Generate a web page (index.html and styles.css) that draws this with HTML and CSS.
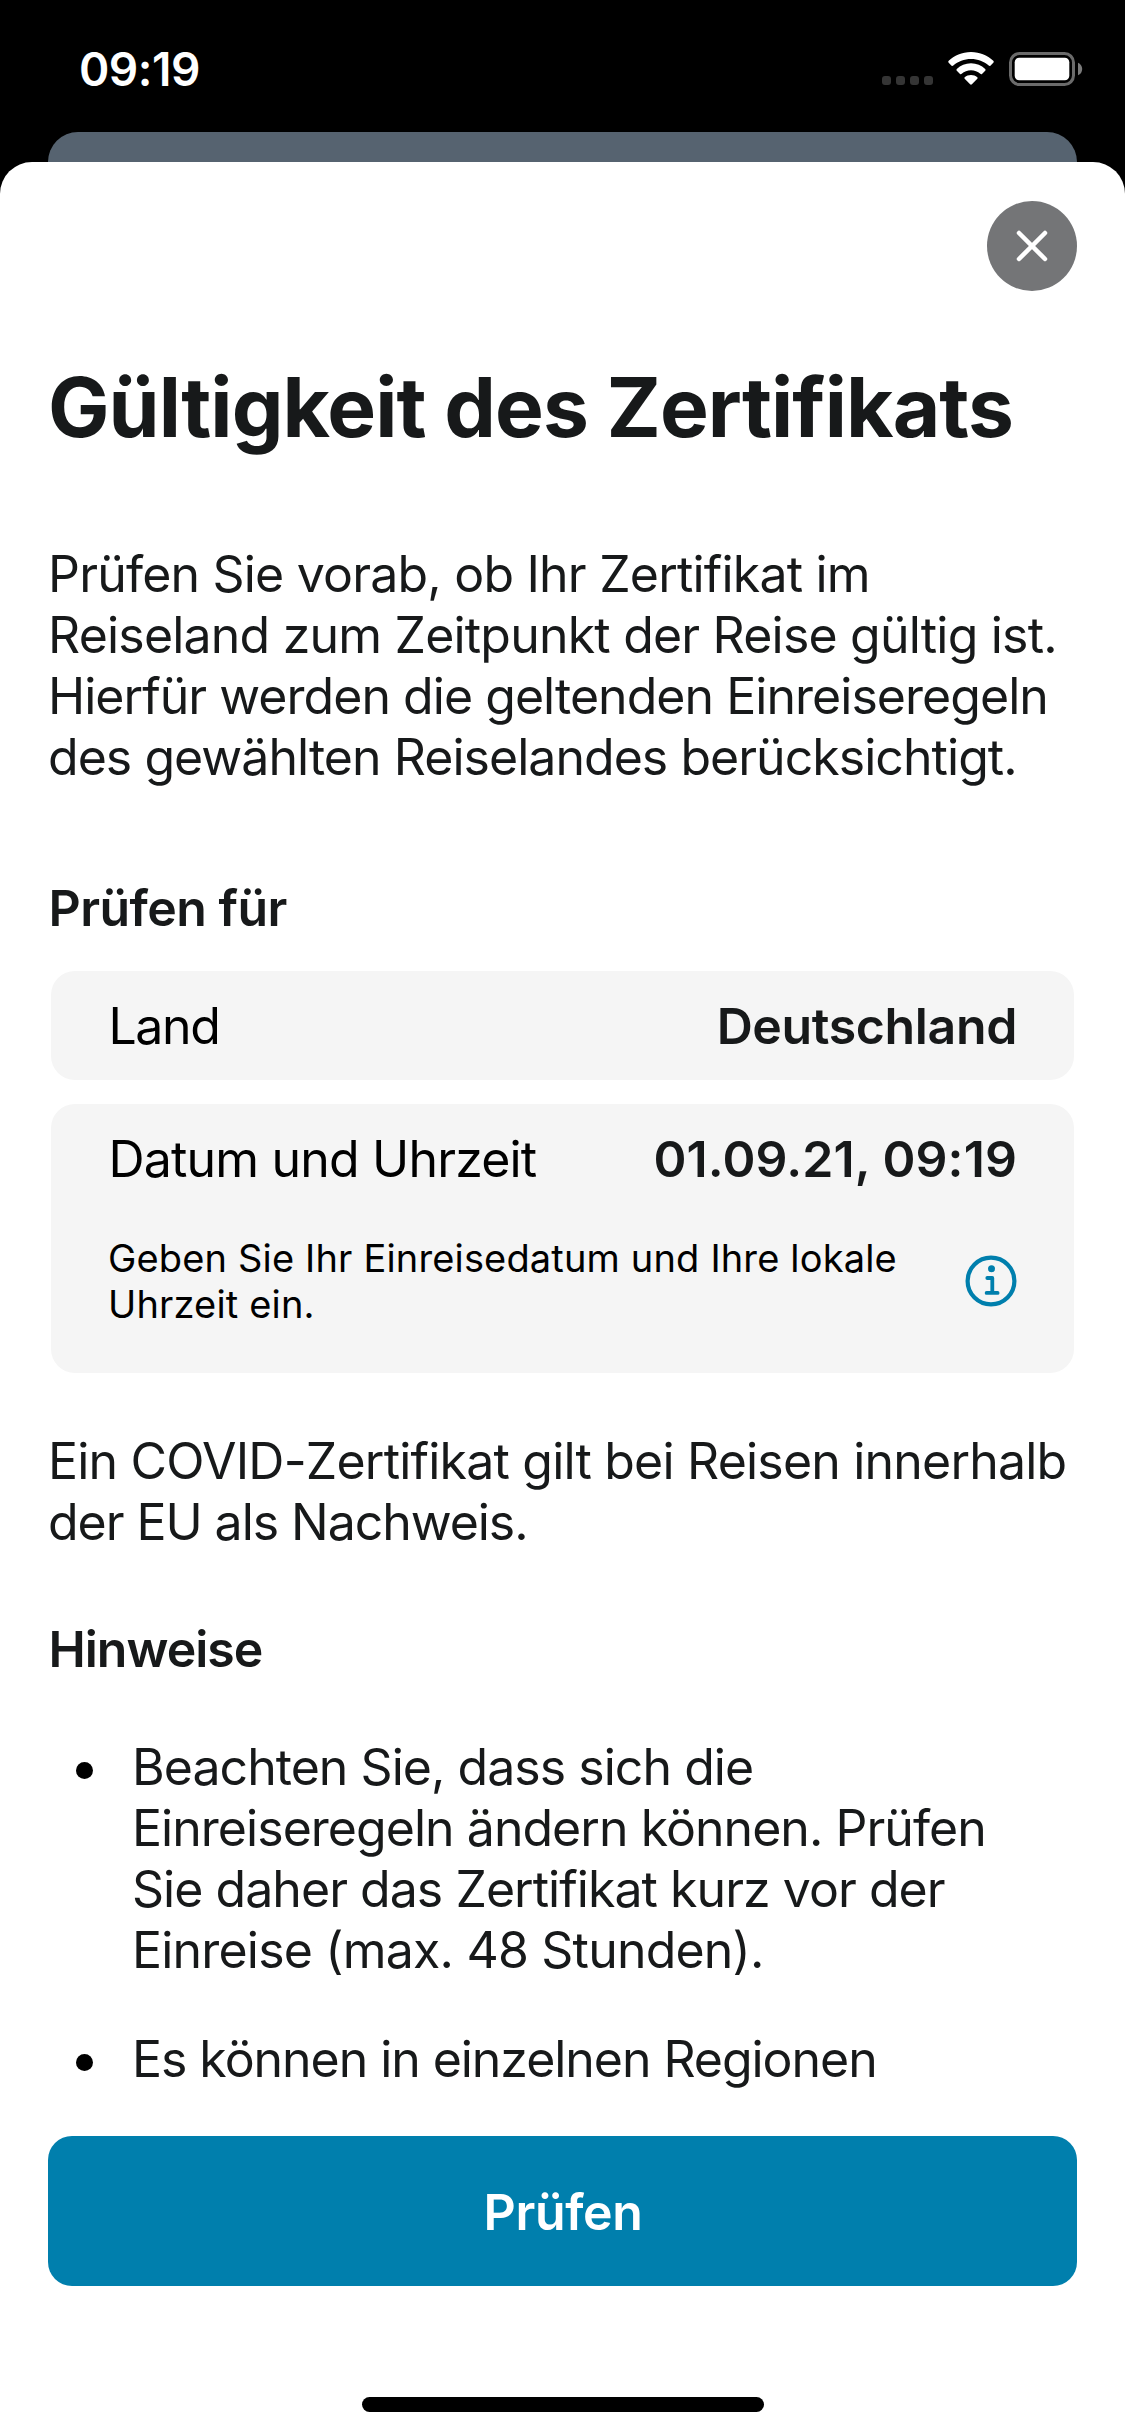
FILE: index.html
```html
<!DOCTYPE html>
<html lang="de">
<head>
<meta charset="utf-8">
<title>Gültigkeit des Zertifikats</title>
<link rel="stylesheet" href="styles.css">
</head>
<body>
<div class="screen">
  <header class="status-bar">
    <span class="time">09:19</span>
    <div class="status-icons">
      <span class="signal"><i></i><i></i><i></i><i></i></span>
      <svg class="wifi" width="46" height="34" viewBox="0 0 46 34">
        <path d="M23 0C14 0 6 3.500 .7 8.800Q-.2 9.800 .7 10.800L3.600 13.700Q4.400 14.400 5.300 13.600C10 9.400 16.200 7 23 7S36 9.400 40.700 13.600Q41.600 14.400 42.400 13.700L45.300 10.800Q46.200 9.800 45.300 8.800C40 3.500 32 0 23 0Z"/>
        <path d="M23 11.300C17.400 11.300 12.600 13.400 8.800 16.900Q7.900 17.800 8.800 18.700L12 21.900Q12.800 22.600 13.700 21.800C16.200 19.600 19.500 18.300 23 18.300S29.800 19.600 32.300 21.800Q33.200 22.600 34 21.900L37.200 18.700Q38.100 17.800 37.200 16.900C33.400 13.400 28.600 11.300 23 11.300Z"/>
        <path d="M23 22.900C20.600 22.900 18.400 23.700 16.700 25.200Q15.900 26 16.700 26.800L22.100 32.200Q23 33.100 23.900 32.200L29.300 26.800Q30.100 26 29.300 25.200C27.600 23.700 25.400 22.900 23 22.900Z"/>
      </svg>
      <svg class="battery" width="74" height="34" viewBox="0 0 74 34">
        <rect x="1.500" y="1.500" width="63" height="31" rx="9" fill="none" stroke="#6b6b6b" stroke-width="3"/>
        <rect x="5.700" y="5.700" width="54.600" height="22.600" rx="4.500" fill="#fff"/>
        <path d="M69 10.700V23.300C71.500 22.300 73.200 20 73.200 17S71.500 11.700 69 10.700Z" fill="#7b7b7b"/>
      </svg>
    </div>
  </header>
  <div class="sheet-behind"></div>
  <main class="sheet">
    <button class="close" aria-label="Schließen">
      <svg width="36" height="36" viewBox="0 0 36 36"><path d="M5 5L31 31M31 5L5 31"/></svg>
    </button>
    <h1 class="title">Gültigkeit des Zertifikats</h1>
    <p class="text intro"><span class="line wide">Prüfen Sie vorab, ob Ihr Zertifikat im</span><span class="line wide">Reiseland zum Zeitpunkt der Reise gültig ist.</span><span class="line">Hierfür werden die geltenden Einreiseregeln</span><span class="line">des gewählten Reiselandes berücksichtigt.</span></p>
    <h2 class="heading check">Prüfen für</h2>
    <section class="card">
      <div class="row"><span class="label short">Land</span><span class="value">Deutschland</span></div>
    </section>
    <section class="card">
      <div class="row"><span class="label">Datum und Uhrzeit</span><span class="value date">01.09.21, 09:19</span></div>
      <div class="note">
        <p class="note-text">Geben Sie Ihr Einreisedatum und Ihre lokale<br>Uhrzeit ein.</p>
        <svg class="info" width="52" height="52" viewBox="0 0 52 52">
          <circle cx="26" cy="26" r="23.400" stroke-width="4.200"/>
          <path d="M22.300 23H27.300V37.900M21.600 37.900H32.600" stroke-width="3.800"/>
          <circle class="dot" cx="26.500" cy="13.800" r="3.500"/>
        </svg>
      </div>
    </section>
    <p class="text result"><span class="line wide">Ein COVID-Zertifikat gilt bei Reisen innerhalb</span><span class="line tight">der EU als Nachweis.</span></p>
    <h2 class="heading hints">Hinweise</h2>
    <ul class="list">
      <li class="item"><span class="line">Beachten Sie, dass sich die</span><span class="line">Einreiseregeln ändern können. Prüfen</span><span class="line">Sie daher das Zertifikat kurz vor der</span><span class="line wide">Einreise (max. 48 Stunden).</span></li>
      <li class="item"><span class="line tight">Es können in einzelnen Regionen</span></li>
    </ul>
    <button class="primary">Prüfen</button>
    <div class="home-indicator"></div>
  </main>
</div>
</body>
</html>
```
FILE: styles.css
```css
* { box-sizing: border-box; }

body {
  margin: 0;
  background: #000;
  color: #17191a;
  font-family: Inter, "Liberation Sans", sans-serif;
}

h1, h2, p, ul { margin: 0; padding: 0; }

button { border: 0; padding: 0; font-family: inherit; }

.screen {
  display: flex;
  flex-direction: column;
  width: 1125px;
  height: 2436px;
  overflow: hidden;
}

.status-bar {
  display: flex;
  flex: none;
  justify-content: space-between;
  height: 132px;
  padding: 41px 42px 0 79px;
}

.time {
  color: #fff;
  font-size: 46px;
  font-weight: 600;
  line-height: 56px;
  letter-spacing: -0.5px;
}

.status-icons {
  display: flex;
  align-items: flex-end;
  height: 45px;
}

.signal { display: flex; gap: 5px; margin: 0 15px 1px 0; }
.signal i { width: 9px; height: 9px; border-radius: 3px; background: #353535; }
.wifi { margin-right: 15px; fill: #fff; }

.sheet-behind {
  flex: none;
  height: 30px;
  margin: 0 48px;
  border-radius: 30px 30px 0 0;
  background: #566370;
}

.sheet {
  display: flex;
  flex: 1;
  flex-direction: column;
  padding: 39px 48px 0;
  border-radius: 32px 32px 0 0;
  background: #fff;
}

.close {
  display: flex;
  flex: none;
  align-items: center;
  justify-content: center;
  align-self: flex-end;
  width: 90px;
  height: 90px;
  border-radius: 50%;
  background: #747577;
}

.close path { stroke: #fff; stroke-width: 4.500; stroke-linecap: round; }

.title {
  margin-top: 67px;
  font-size: 82px;
  font-weight: 700;
  line-height: 100px;
  letter-spacing: -0.92px;
  white-space: nowrap;
}

.text, .item {
  font-size: 50px;
  line-height: 61px;
  letter-spacing: -0.96px;
  white-space: nowrap;
}

.line { display: block; }
.wide { letter-spacing: -0.8px; }
.tight { letter-spacing: -1.05px; }

.intro { margin-top: 86px; }
.result { margin-top: 58px; }

.heading {
  padding-left: 0.500px;
  font-size: 50px;
  font-weight: 600;
  line-height: 61px;
}

.check { margin: 90px 0 32px; letter-spacing: -0.53px; }
.hints { margin-top: 66px; letter-spacing: -1px; }

.card {
  flex: none;
  margin: 0 3px;
  border-radius: 24px;
  background: #f5f5f5;
}

.card + .card { height: 269px; margin-top: 24px; }

.row {
  display: flex;
  align-items: center;
  justify-content: space-between;
  height: 109px;
  padding: 1px 57px 0 57.5px;
}

.label { color: #000; font-size: 50px; letter-spacing: -0.82px; }
.short { letter-spacing: -1.4px; }
.value { font-size: 50px; font-weight: 600; letter-spacing: -0.36px; }
.date { letter-spacing: 0.1px; }

.note {
  display: flex;
  align-items: center;
  justify-content: space-between;
  margin-top: 22px;
  padding: 0 57px;
}

.note-text {
  color: #000;
  font-size: 38px;
  line-height: 46px;
  letter-spacing: 0.16px;
  white-space: nowrap;
}

.info { fill: none; stroke: #007fad; stroke-linecap: round; stroke-linejoin: round; }
.info .dot { fill: #007fad; stroke: none; }

.list { margin-top: 57px; list-style: none; }

.item {
  display: grid;
  grid-template-columns: 84px auto;
}

.item::before {
  content: "";
  grid-row: 1;
  width: 17px;
  height: 17px;
  margin: 25px 0 0 28px;
  border-radius: 50%;
  background: #000;
}

.item .line { grid-column: 2; }
.item + .item { margin-top: 48px; }

.primary {
  flex: none;
  height: 150px;
  margin-top: 46px;
  padding: 1px 0 0 1px;
  border-radius: 24px;
  background: #007fad;
  color: #fff;
  font-size: 50px;
  font-weight: 600;
  letter-spacing: -0.38px;
}

.home-indicator {
  flex: none;
  align-self: center;
  width: 402px;
  height: 15px;
  margin-top: 111px;
  border-radius: 7.500px;
  background: #000;
}
```
